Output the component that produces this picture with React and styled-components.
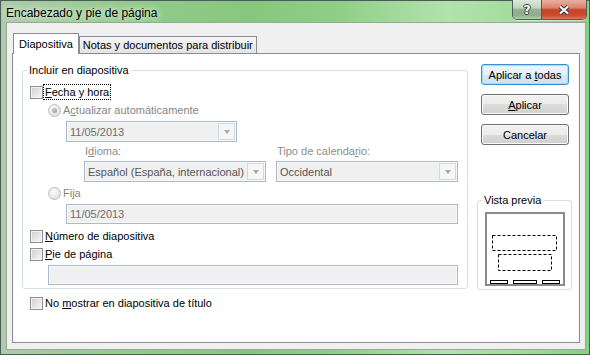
import React from "react";
import styled, { createGlobalStyle } from "styled-components";

const GlobalStyle = createGlobalStyle`
  html, body {
    margin: 0;
    padding: 0;
    background: #fff;
  }
  body {
    font-family: "Liberation Sans", Arial, sans-serif;
    font-size: 11px;
    color: #000;
  }
  * {
    box-sizing: border-box;
  }
`;

const Window = styled.div`
  width: 590px;
  height: 355px;
  display: flex;
  flex-direction: column;
  border: 1px solid #4d5b57;
  background: linear-gradient(
    90deg,
    #adcbaa 0%,
    #96cc90 18%,
    #86c77e 42%,
    #8fd088 58%,
    #b3e2ad 76%,
    #a3dc9c 88%,
    #86d07e 100%
  );
`;

const TitleBar = styled.div`
  height: 21px;
  flex-shrink: 0;
  display: flex;
  align-items: flex-start;
`;

const Title = styled.div`
  margin: 5px 0 0 5px;
  font-size: 12px;
  line-height: 15px;
  text-shadow: 0 0 6px rgba(255, 255, 255, 0.9), 0 0 10px rgba(255, 255, 255, 0.7);
`;

const Controls = styled.div`
  margin-left: auto;
  margin-right: 2px;
  height: 20px;
  margin-top: -1px;
  display: flex;
  border: 1px solid #4f5e52;
  border-top: none;
  border-radius: 0 0 5px 5px;
  overflow: hidden;
  box-shadow: 0 1px 0 rgba(255, 255, 255, 0.5);
`;

const CaptionButton = styled.div`
  width: ${(p) => p.$w}px;
  display: flex;
  align-items: center;
  justify-content: center;
  font: bold 13px "DejaVu Sans", sans-serif;
  color: #fff;
  text-shadow: 1px 0 #3a3a3a, -1px 0 #3a3a3a, 0 1px #3a3a3a, 0 -1px #3a3a3a;
  background: ${(p) =>
    p.$close
      ? "linear-gradient(#eab0a2 0%, #dc8470 40%, #c6432a 52%, #c94a2f 80%, #dc7a5c 100%)"
      : "linear-gradient(#dbe8d9 0%, #c2d6bf 40%, #93b08f 52%, #8fae8b 80%, #b0cfac 100%)"};
  & + & {
    border-left: 1px solid #4f5e52;
  }
`;

const Client = styled.div`
  flex: 1;
  margin: 0 3px 4px 5px;
  background: #f0f0f0;
  border: 1px solid #9aa69a;
  padding: 10px 5px 6px 5px;
  display: flex;
  flex-direction: column;
`;

const TabRow = styled.div`
  height: 21px;
  display: flex;
  align-items: flex-end;
  padding-left: 1px;
  margin-bottom: -1px;
  position: relative;
  z-index: 1;
`;

const Tab = styled.div`
  height: ${(p) => (p.$active ? 21 : 17)}px;
  margin-bottom: ${(p) => (p.$active ? 0 : 1)}px;
  padding: ${(p) => (p.$active ? "1px 5px 0" : "0 3px")};
  line-height: ${(p) => (p.$active ? 19 : 16)}px;
  border: 1px solid #898c95;
  border-bottom: none;
  background: ${(p) => (p.$active ? "#fff" : "linear-gradient(#f5f5f5, #e3e3e3)")};
  white-space: nowrap;
`;

const Panel = styled.div`
  flex: 1;
  background: #fff;
  border: 1px solid #898c95;
  padding: 9px 6px 0 9px;
  display: flex;
  gap: 9px;
`;

const LeftColumn = styled.div`
  width: 446px;
  display: flex;
  flex-direction: column;
  align-items: flex-start;
`;

const RightColumn = styled.div`
  width: 95px;
  display: flex;
  flex-direction: column;
  align-items: flex-start;
`;

const Group = styled.fieldset`
  margin: ${(p) => p.$mt || 0}px 0 0;
  min-width: 0;
  width: ${(p) => p.$w}px;
  border: 1px solid #d5dfe5;
  border-radius: 3px;
  padding: 0 ${(p) => p.$pr}px ${(p) => p.$pb}px 7px;
  display: flex;
  flex-direction: column;
  align-items: flex-start;
`;

const Legend = styled.legend`
  padding: 0 2px;
  margin-left: -3px;
  line-height: 14px;
  font-size: 11px;
`;

const Option = styled.label`
  height: 16px;
  display: flex;
  align-items: center;
  margin-top: ${(p) => p.$mt || 0}px;
  margin-left: ${(p) => p.$indent || 0}px;
  color: ${(p) => (p.$disabled ? "#858585" : "#000")};
  white-space: nowrap;
`;

const OptionText = styled.span`
  line-height: 14px;
  padding: 0 1px;
  outline: ${(p) => (p.$focus ? "1px dotted #000" : "none")};
`;

const CheckBox = styled.span`
  width: 13px;
  height: 13px;
  margin-right: 1px;
  border: 1px solid #8e8f8f;
  background: linear-gradient(135deg, #cbcbcb 0%, #e8e8e8 60%, #f6f6f6 100%);
  box-shadow: inset 0 0 0 1px #f4f4f4;
  flex-shrink: 0;
`;

const Radio = styled.span`
  width: 13px;
  height: 13px;
  margin-right: 1px;
  border-radius: 50%;
  border: 1px solid #bdbdbd;
  background: radial-gradient(circle at 40% 35%, #fbfbfb 0%, #e6e6e6 60%, #d6d6d6 100%);
  display: flex;
  align-items: center;
  justify-content: center;
  flex-shrink: 0;
  &::after {
    content: "";
    display: ${(p) => (p.$checked ? "block" : "none")};
    width: 5px;
    height: 5px;
    border-radius: 50%;
    background: radial-gradient(circle at 40% 35%, #c9c9c9, #9a9a9a);
  }
`;

const Key = styled.span`
  text-decoration: underline;
  text-underline-offset: 1px;
`;

const Combo = styled.div`
  width: ${(p) => p.$w}px;
  height: 21px;
  margin-top: ${(p) => p.$mt || 0}px;
  margin-left: ${(p) => p.$indent || 0}px;
  padding: 0 1px 0 3px;
  display: flex;
  align-items: center;
  border: 1px solid #abbacb;
  background: #f0f0f0;
  box-shadow: inset 0 0 0 1px #f8f9fb;
  color: ${(p) => p.$color || "#6d6d6d"};
  flex-shrink: 0;
`;

const ComboValue = styled.span`
  flex: 1;
  white-space: nowrap;
  overflow: hidden;
`;

const DropButton = styled.span`
  width: 17px;
  height: 17px;
  border: 1px solid #d2d8df;
  background: #f6f6f6;
  display: flex;
  align-items: center;
  justify-content: center;
  &::after {
    content: "";
    margin-top: 1px;
    border-left: 3.5px solid transparent;
    border-right: 3.5px solid transparent;
    border-top: 4px solid #a8a8a8;
  }
`;

const TextField = styled.div`
  width: ${(p) => p.$w}px;
  height: 20px;
  margin-top: ${(p) => p.$mt || 0}px;
  margin-left: ${(p) => p.$indent || 0}px;
  padding-left: 3px;
  display: flex;
  align-items: center;
  border: 1px solid #abbacb;
  background: #f0f0f0;
  box-shadow: inset 0 0 0 1px #f8f9fb;
  color: #6d6d6d;
`;

const Labels = styled.div`
  height: 14px;
  margin-top: ${(p) => p.$mt}px;
  margin-left: ${(p) => p.$indent}px;
  display: grid;
  grid-template-columns: 182px 182px;
  column-gap: 10px;
  line-height: 14px;
  color: #8d8d8d;
  & > span {
    padding-left: 1px;
  }
`;

const ComboRow = styled.div`
  margin-top: ${(p) => p.$mt}px;
  margin-left: ${(p) => p.$indent}px;
  display: flex;
  gap: 10px;
`;

const Button = styled.div`
  width: 88px;
  height: 21px;
  margin-top: ${(p) => p.$mt}px;
  margin-left: 4px;
  display: flex;
  align-items: center;
  justify-content: center;
  border: 1px solid ${(p) => (p.$default ? "#3c8fce" : "#707070")};
  border-radius: 3px;
  background: ${(p) =>
    p.$default
      ? "linear-gradient(#eef5fa 0%, #e6f0f7 50%, #d8e8f3 50%, #cfe2f0 100%)"
      : "linear-gradient(#f2f2f2 0%, #ebebeb 50%, #dddddd 50%, #cfcfcf 100%)"};
  box-shadow: inset 0 0 0 1px ${(p) => (p.$default ? "#a9dcf8" : "#fbfbfb")};
  white-space: nowrap;
`;

const Preview = styled.svg`
  display: block;
  margin-top: 5px;
`;

function Check({ children, mt, indent, focus }) {
  return (
    <Option $mt={mt} $indent={indent}>
      <CheckBox />
      <OptionText $focus={focus}>{children}</OptionText>
    </Option>
  );
}

function RadioOption({ children, mt, indent, checked }) {
  return (
    <Option $mt={mt} $indent={indent} $disabled>
      <Radio $checked={checked} />
      <OptionText>{children}</OptionText>
    </Option>
  );
}

export default function App() {
  return (
    <>
      <GlobalStyle />
      <Window>
        <TitleBar>
          <Title>Encabezado y pie de página</Title>
          <Controls>
            <CaptionButton $w={28}>?</CaptionButton>
            <CaptionButton $w={45} $close>
              <svg width="12" height="10" viewBox="0 0 12 10">
                <path d="M2 1.5 L10 8.5 M10 1.5 L2 8.5" stroke="#3a3a3a" strokeWidth="4" />
                <path d="M2 1.5 L10 8.5 M10 1.5 L2 8.5" stroke="#fff" strokeWidth="2" />
              </svg>
            </CaptionButton>
          </Controls>
        </TitleBar>

        <Client>
          <TabRow>
            <Tab $active>Diapositiva</Tab>
            <Tab>Notas y documentos para distribuir</Tab>
          </TabRow>

          <Panel>
            <LeftColumn>
              <Group $w={446} $pr={9} $pb={3}>
                <Legend>Incluir en diapositiva</Legend>
                <Check mt={7} focus>
                  <Key>F</Key>echa y hora
                </Check>
                <RadioOption mt={2} indent={18} checked>
                  A<Key>c</Key>tualizar automáticamente
                </RadioOption>
                <Combo $w={171} $mt={3} $indent={36}>
                  <ComboValue>11/05/2013</ComboValue>
                  <DropButton />
                </Combo>
                <Labels $mt={2} $indent={54}>
                  <span>
                    I<Key>d</Key>ioma:
                  </span>
                  <span>
                    Tipo de calenda<Key>r</Key>io:
                  </span>
                </Labels>
                <ComboRow $mt={3} $indent={54}>
                  <Combo $w={182} $color="#555">
                    <ComboValue>Español (España, internacional)</ComboValue>
                    <DropButton />
                  </Combo>
                  <Combo $w={182} $color="#555">
                    <ComboValue>Occidental</ComboValue>
                    <DropButton />
                  </Combo>
                </ComboRow>
                <RadioOption mt={3} indent={18}>
                  Fija
                </RadioOption>
                <TextField $w={392} $mt={3} $indent={36}>
                  11/05/2013
                </TextField>
                <Check mt={4}>
                  <Key>N</Key>úmero de diapositiva
                </Check>
                <Check mt={2}>
                  <Key>P</Key>ie de página
                </Check>
                <TextField $w={410} $mt={3} $indent={18} />
              </Group>
              <Check mt={6} indent={8}>
                No <Key>m</Key>ostrar en diapositiva de título
              </Check>
            </LeftColumn>

            <RightColumn>
              <Button $mt={1} $default>
                <span>
                  Aplicar a <Key>t</Key>odas
                </span>
              </Button>
              <Button $mt={9}>
                <span>
                  <Key>A</Key>plicar
                </span>
              </Button>
              <Button $mt={9}>Cancelar</Button>

              <Group $w={95} $pr={6} $pb={3} $mt={48}>
                <Legend>Vista previa</Legend>
                <Preview width="80" height="74" viewBox="0 0 80 74">
                  <rect x="1" y="1" width="78" height="72" fill="#fff" stroke="#8a8a8a" strokeWidth="2" />
                  <g fill="none" stroke="#000" strokeWidth="1">
                    <rect x="7.5" y="23.5" width="64" height="15" strokeDasharray="3 2" />
                    <rect x="13.5" y="42.5" width="53" height="16" strokeDasharray="3 2" />
                    <rect x="5.5" y="68.5" width="17" height="3" />
                    <rect x="28.5" y="68.5" width="23" height="3" />
                    <rect x="57.5" y="68.5" width="17" height="3" />
                  </g>
                </Preview>
              </Group>
            </RightColumn>
          </Panel>
        </Client>
      </Window>
    </>
  );
}
